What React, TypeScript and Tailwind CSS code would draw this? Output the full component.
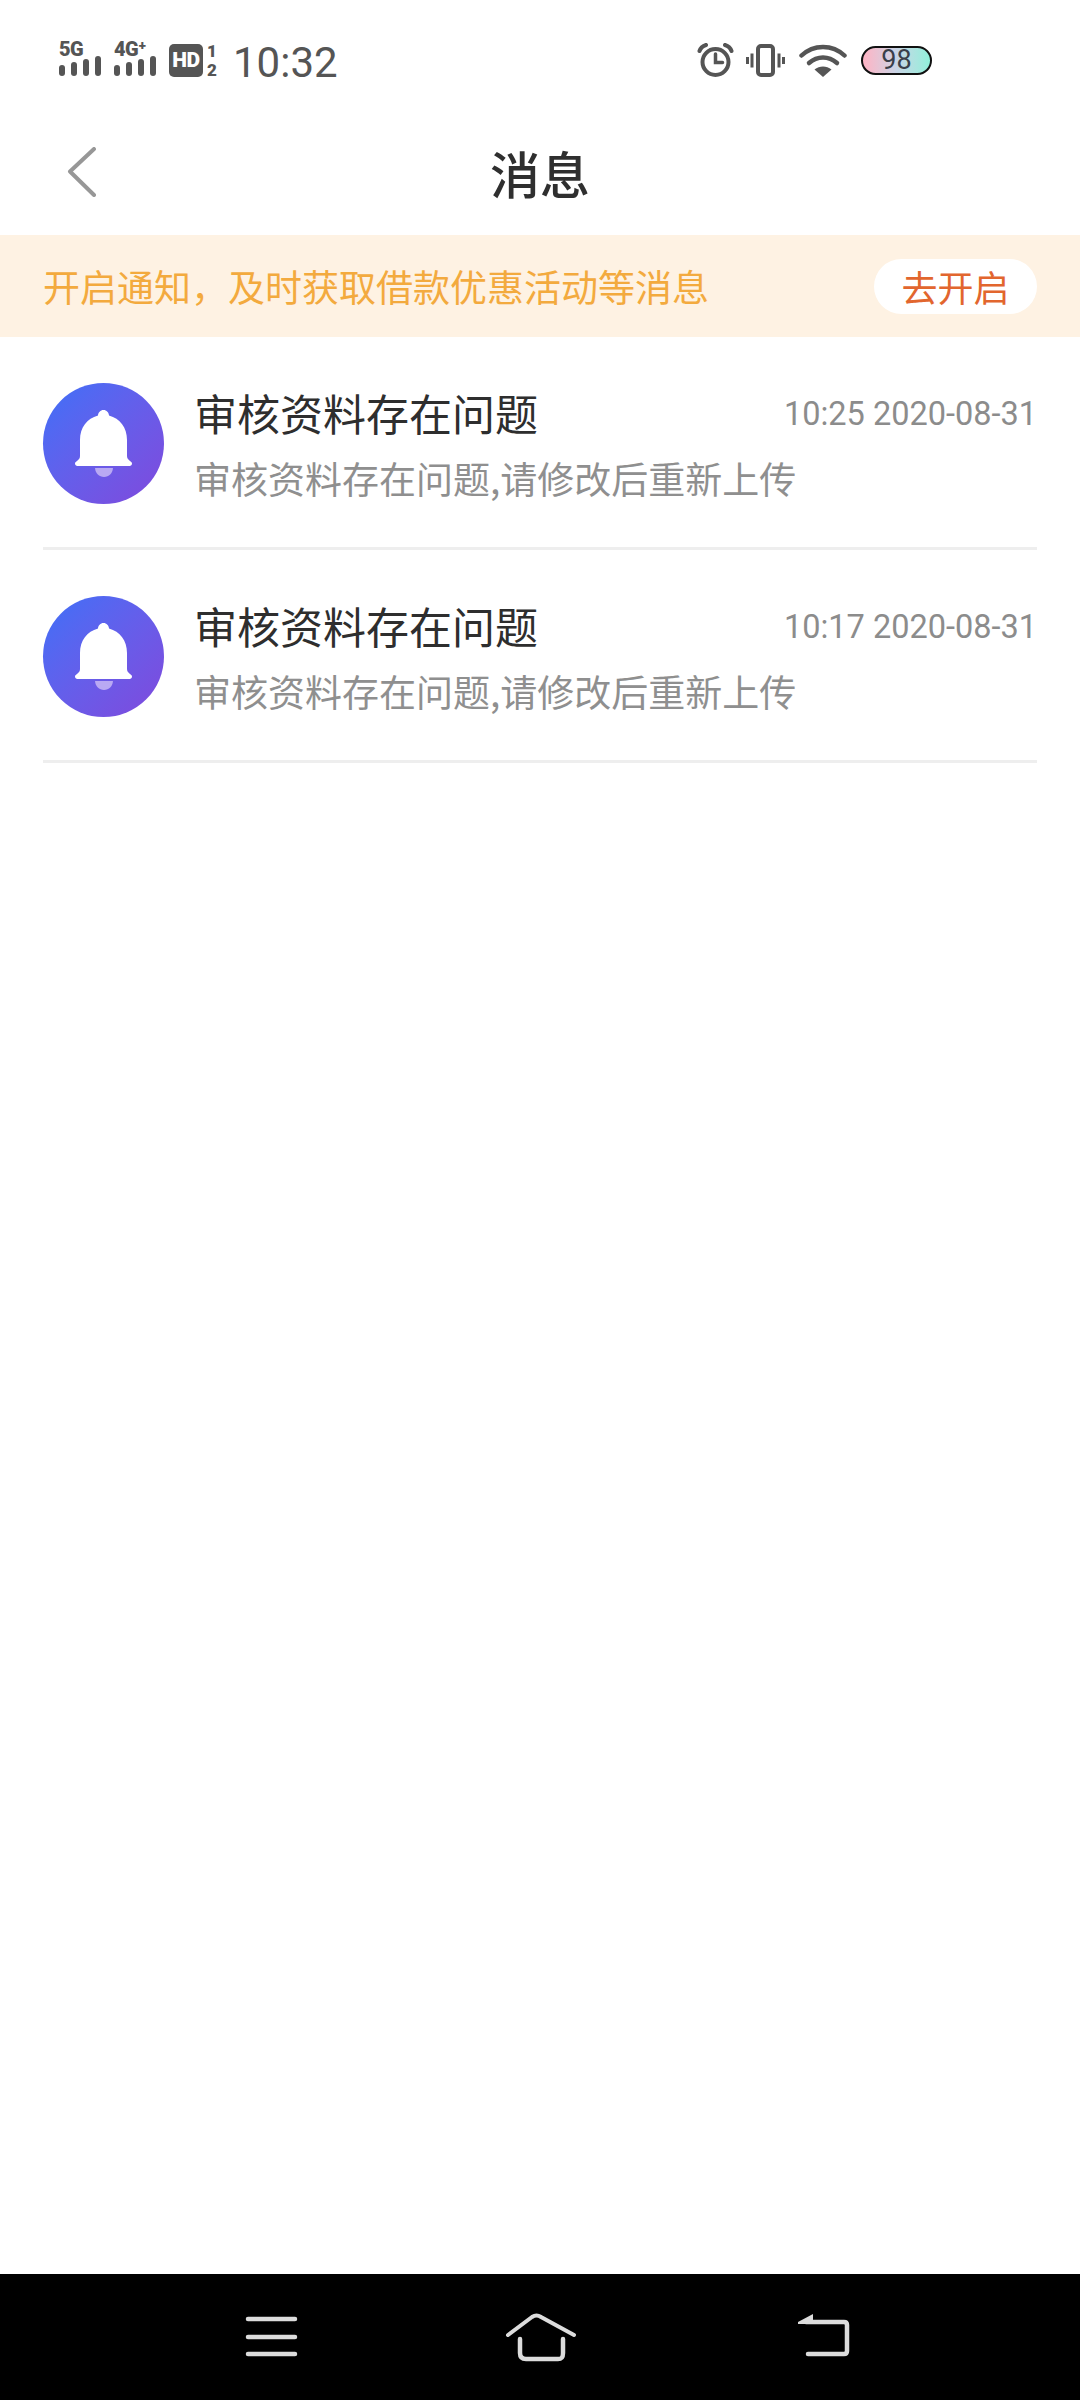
import React from "react";

const CJK = "font-['Noto_Sans_CJK_SC','Noto_Sans',sans-serif]";

function Signal({ label }: { label: string }) {
  const hs = ["h-[11px]", "h-[14px]", "h-[17px]", "h-[20px]"];
  return (
    <div className="flex flex-col w-[44px]">
      <span className="font-['Roboto',sans-serif] font-black text-[20px] leading-[15px] h-[14px] text-[#555] tracking-[-0.5px] whitespace-nowrap">{label}</span>
      <div className="flex items-end gap-[6px] h-[20px]">
        {hs.map((h) => (
          <div key={h} className={`w-[6px] rounded-[3px] bg-[#555] ${h}`} />
        ))}
      </div>
    </div>
  );
}

function Bell() {
  return (
    <div className="w-[121px] h-[121px] rounded-full shrink-0 bg-gradient-to-br from-[#3a70f8] to-[#7f48dc]">
      <svg width="121" height="121" viewBox="0 0 121 121">
        <path d="M55 32.500c0-3 2.500-5.500 5.500-5.500s5.500 2.500 5.500 5.500c11 3 18 12 18 24.500v16c0 2 1 3.500 3 5 1.500 1 2 1.800 2 2.500 0 1.500-1 2.500-2.500 2.500h-52c-1.500 0-2.500-1-2.500-2.500 0-.7.500-1.500 2-2.500 2-1.500 3-3 3-5V57c0-12.500 7-21.500 18-24.500z" fill="#fff" />
        <path d="M52 85h18c-.5 5.500-4 9-9 9s-8.500-3.500-9-9z" fill="#b9a9f3" />
      </svg>
    </div>
  );
}

function Row({ time }: { time: string }) {
  return (
    <div className="h-[213px] border-b-[3px] border-[#eeeeee] pt-[46px] flex items-start">
      <Bell />
      <div className="flex-1 ml-[30px] min-w-0">
        <div className="flex items-center justify-between h-[50px] mt-[4px]">
          <span className={`${CJK} text-[43px] leading-[50px] text-[#2e2e2e]`}>审核资料存在问题</span>
          <span className="font-['Roboto',sans-serif] text-[32.500px] leading-[40px] text-[#8c8c8c] mt-[3px]">{time}</span>
        </div>
        <div className={`${CJK} text-[37px] leading-[50px] text-[#8f8f8f] mt-[16px]`}>审核资料存在问题,请修改后重新上传</div>
      </div>
    </div>
  );
}

export default function App() {
  return (
    <div className="w-[1080px] h-[2400px] bg-white flex flex-col overflow-hidden">
      {/* status bar */}
      <div className="h-[110px] flex items-start justify-between pl-[59px] pr-[148px] pt-[42px]">
        <div className="flex items-start">
          <Signal label="5G" />
          <div className="w-[11px]" />
          <Signal label="4G⁺" />
          <div className="ml-[11px] mt-[2px] w-[34px] h-[33px] rounded-[5px] bg-[#555] flex items-center justify-center font-['Roboto',sans-serif] font-black text-[21px] tracking-[-0.5px] leading-none text-white">HD</div>
          <div className="ml-[2px] mt-[2px] w-[14px] h-[34px] flex flex-col items-center justify-between font-['Roboto',sans-serif] font-black text-[17px] leading-[15px] text-[#555]">
            <span>1</span>
            <span>2</span>
          </div>
          <span className="ml-[14px] font-['Roboto',sans-serif] text-[42px] leading-[42px] text-[#555]">10:32</span>
        </div>
        <div className="flex items-center mt-[1px]">
          <svg width="37" height="34" viewBox="0 0 37 34" fill="none" stroke="#555" strokeLinecap="round">
            <circle cx="18.500" cy="19" r="13" strokeWidth="4" />
            <path d="M18.500 11v8.500h7" strokeWidth="3.500" />
            <path d="M2.500 8C3.500 5 6 3 9 2M34.500 8C33.500 5 31 3 28 2" strokeWidth="4" />
          </svg>
          <svg className="ml-[12px]" width="39" height="33" viewBox="0 0 39 33" fill="none" stroke="#555">
            <rect x="12" y="2" width="15" height="29" rx="3" strokeWidth="4" />
            <path d="M6 9.500v14M1.500 13v7M33 9.500v14M37.500 13v7" strokeWidth="3" />
          </svg>
          <svg className="ml-[14px]" width="48" height="33" viewBox="0 0 48 33" fill="none" stroke="#555" strokeWidth="4.500" strokeLinecap="round">
            <path d="M2.500 11.500C14.500 0 33.500 0 45.500 11.500" />
            <path d="M10 19c8.500-7.500 19.500-7.500 28 0" />
            <path d="M24 33l-8.500-7.500c5-4 12-4 17 0z" fill="#555" stroke="none" />
          </svg>
          <div className="ml-[14px] w-[71px] h-[29px] rounded-full border-2 border-[#111] bg-gradient-to-r from-[#ffb3c4] via-[#c8d4e6] to-[#8ff0da] flex items-center justify-center font-['Roboto',sans-serif] text-[27px] leading-none text-[#3a3f4a]">98</div>
        </div>
      </div>

      {/* nav */}
      <div className="h-[125px] relative flex items-center justify-center">
        <svg className="absolute left-[67px] top-[37px]" width="30" height="50" viewBox="0 0 30 50" fill="none" stroke="#979797" strokeWidth="4" strokeLinecap="round" strokeLinejoin="round">
          <path d="M27 2L3 24.500 27 48" />
        </svg>
        <span className={`${CJK} font-medium text-[50px] leading-[60px] text-[#2f2f2f] mt-[-2px]`}>消息</span>
      </div>

      {/* banner */}
      <div className="h-[102px] bg-[#fef2e3] flex items-center justify-between pl-[43px] pr-[43px]">
        <span className={`${CJK} text-[37px] leading-[50px] text-[#f3aa3e]`}>开启通知，及时获取借款优惠活动等消息</span>
        <span className={`${CJK} w-[163px] h-[55px] rounded-full bg-white flex items-center justify-center text-[36px] leading-none text-[#e2662e]`}>去开启</span>
      </div>

      {/* list */}
      <div className="flex-1 px-[43px]">
        <Row time="10:25 2020-08-31" />
        <Row time="10:17 2020-08-31" />
      </div>

      {/* system nav */}
      <div className="h-[126px] bg-black relative flex items-start">
        <svg className="absolute left-0 top-0" width="1080" height="126" viewBox="0 2274 1080 126" fill="none" stroke="#dcdcdc" strokeWidth="4.500" strokeLinecap="round" strokeLinejoin="round">
          <path d="M248 2319h47M248 2337h47M248 2354h47" />
          <path d="M508 2335l24-18c3-2 6-2 9 0l33 18" strokeWidth="4" />
          <path d="M520 2339v14c0 4 2 6 6 6h32c4 0 5-2 5-6v-14" strokeWidth="4.500" />
          <path d="M806 2322h38c2 0 3 1 3 3v26c0 2-1 3-3 3h-36" strokeWidth="4.500" />
          <path d="M798 2322l15-8v10h-15z" fill="#dcdcdc" stroke="none" />
        </svg>
      </div>
    </div>
  );
}
